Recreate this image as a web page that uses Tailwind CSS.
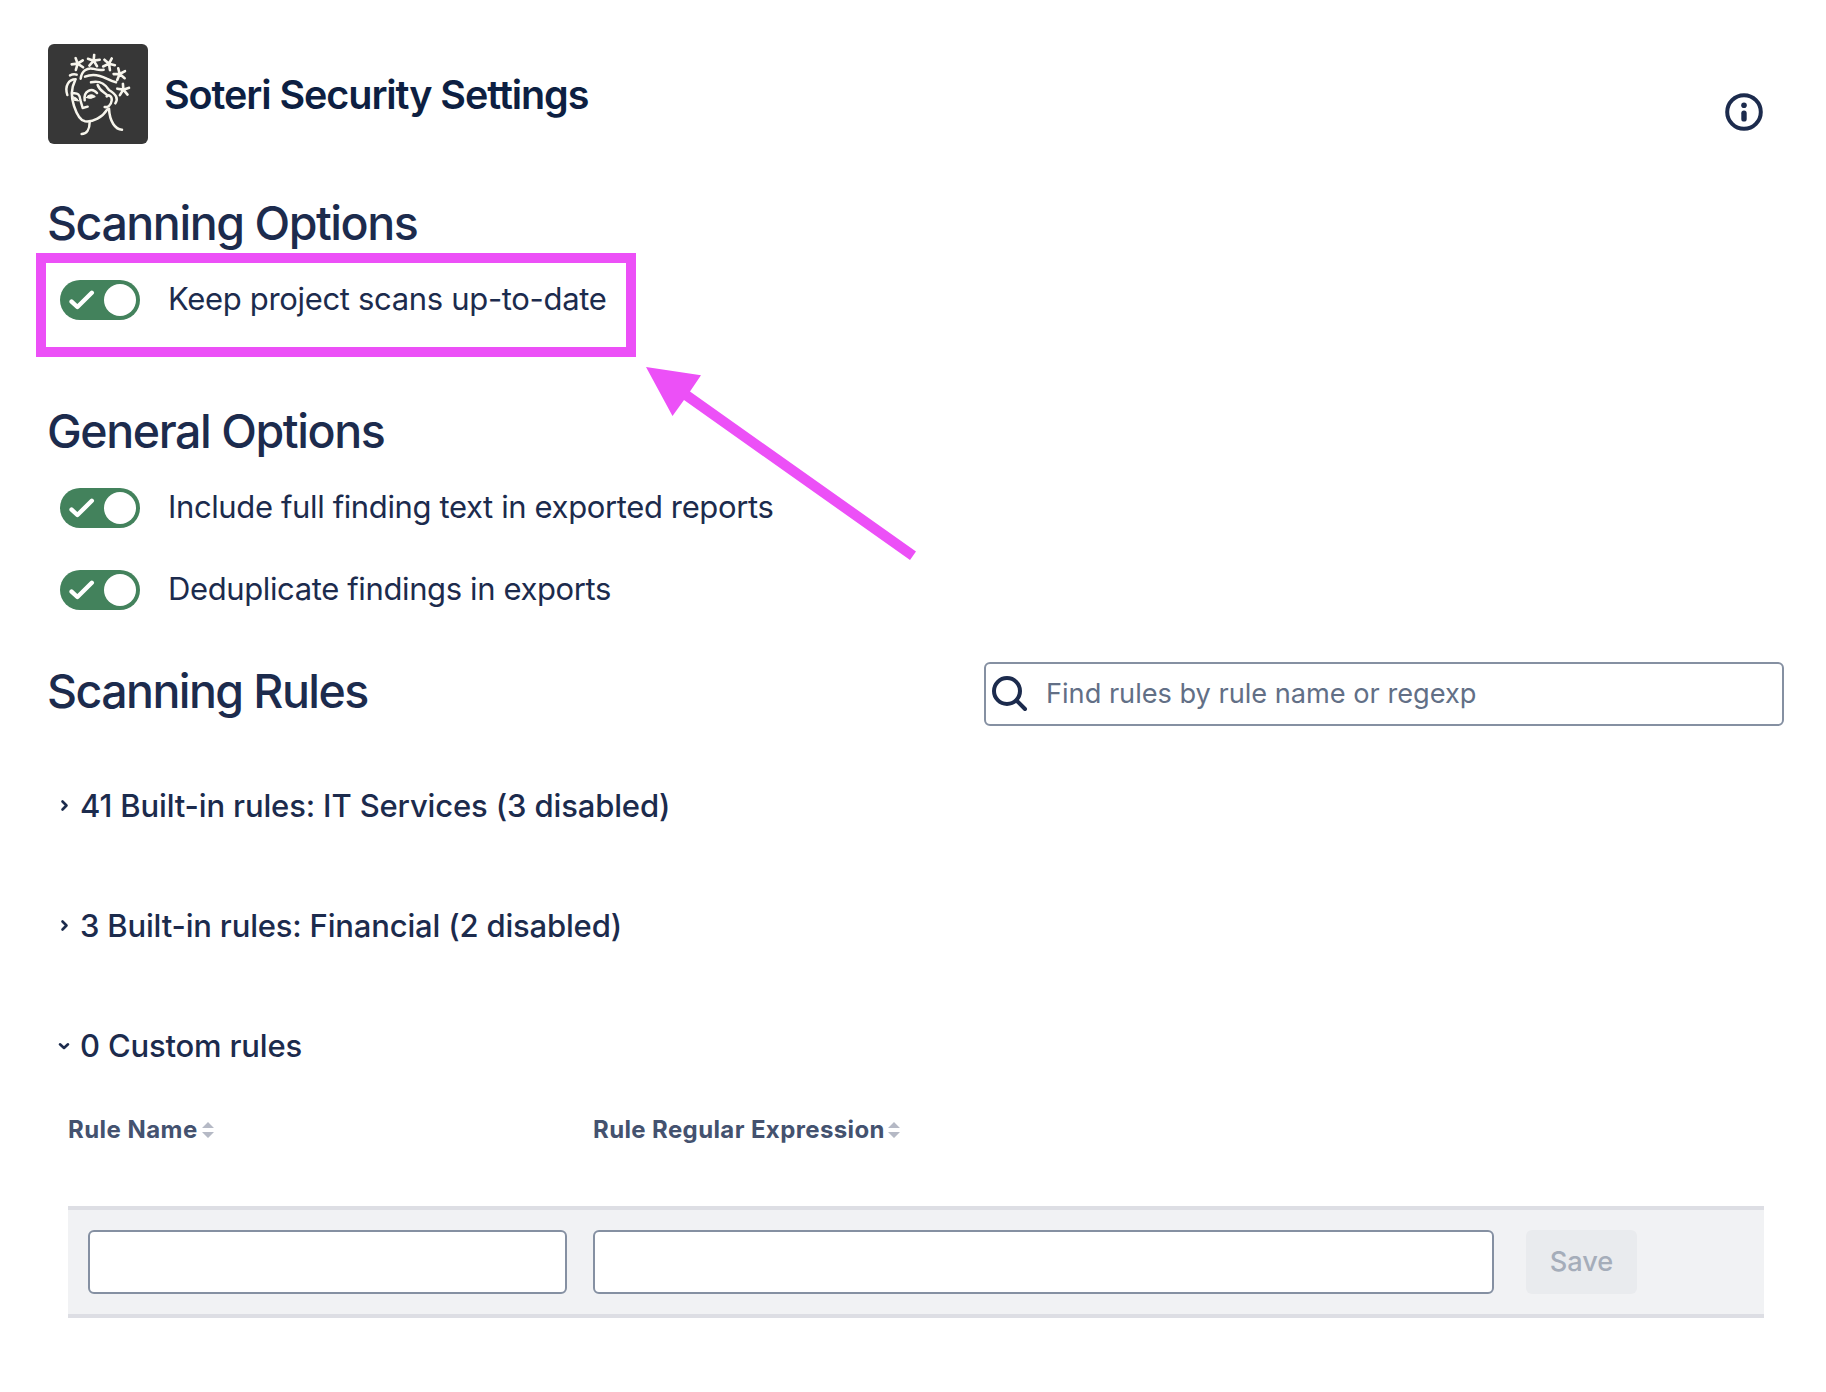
<!DOCTYPE html>
<html lang="en">
<head>
<meta charset="utf-8">
<title>Soteri Security Settings</title>
<script src="https://cdn.jsdelivr.net/npm/@tailwindcss/browser@4"></script>
</head>
<body class="relative bg-white font-['Inter',sans-serif] text-[#1C2B4D]">
<svg class="hidden">
  <symbol id="check" viewBox="0 0 26 20"><path d="M2.6 11.6 L8.4 17 L22.8 2.8" fill="none" stroke="#fff" stroke-width="4.4" stroke-linecap="round" stroke-linejoin="round"/></symbol>
  <symbol id="sort" viewBox="0 0 12 16"><path d="M0 6 L6 0 L12 6Z M0 10 L12 10 L6 16Z" fill="#B5B9C5"/></symbol>
  <symbol id="flower" viewBox="-21 -21 42 42"><path d="M0 0V-17M0 0L17 -4M0 0L11 15M0 0L-11 15M0 0L-17 -4" fill="none" stroke="#F7F5EC" stroke-width="7.5" stroke-linecap="round"/></symbol>
</svg>

<main class="flex flex-col pl-12 pr-[42px] pt-11">
  <header class="flex h-[100px] items-center">
    <svg class="size-[100px] rounded-md bg-[#373737]" viewBox="54 42 300 300" fill="none" stroke="#F7F5EC" stroke-width="7.5" stroke-linecap="round" stroke-linejoin="round">
      <use href="#flower" x="121" y="79" width="44" height="44" transform="rotate(-20 143 101)"/>
      <use href="#flower" x="169" y="70" width="44" height="44" transform="rotate(5 191 92)"/>
      <use href="#flower" x="215" y="79" width="44" height="44" transform="rotate(28 237 101)"/>
      <use href="#flower" x="247" y="110" width="44" height="44" transform="rotate(-14 269 132)"/>
      <use href="#flower" x="258" y="157" width="44" height="44" transform="rotate(-4 280 179)"/>
      <path d="M112 195C103 166 117 148 137 148"/>
      <path d="M120 136Q130 131 140 134"/>
      <path d="M152 146C155 122 172 113 188 116C202 120 212 121 221 119"/>
      <path d="M165 140C192 128 215 138 230 146Q246 154 258 157"/>
      <path d="M183 157C212 150 226 163 237 180C258 193 266 205 256 220"/>
      <path d="M203 165C208 180 219 184 230 194"/>
      <path d="M135 152C121 180 124 205 132 228C140 252 152 272 165 274C190 277 217 262 232 238"/>
      <path d="M230 199C236 192 247 199 245 212C243 226 233 233 224 231"/>
      <path d="M129 190C143 188 150 194 151 210L158 234L173 230"/>
      <path d="M164 211C160 182 186 171 201 189"/>
      <path d="M169 203C174 192 189 192 196 200Q183 209 169 203Z" fill="#F7F5EC" stroke-width="3"/>
      <path d="M130 200Q142 203 146 213L133 211Z" fill="#F7F5EC" stroke-width="3"/>
      <path d="M179 276C179 298 170 312 155 312"/>
      <path d="M237 236C239 275 256 299 276 299"/>
    </svg>
    <h1 class="ml-4 mt-1 text-[39.5px] font-semibold leading-none tracking-[-1.08px] text-[#0D1F42]">Soteri Security Settings</h1>
    <svg class="ml-auto mr-[21px] mt-9 size-[38px]" viewBox="0 0 38 38">
      <circle cx="19" cy="19" r="16.8" fill="none" stroke="#1C2B4D" stroke-width="4"/>
      <circle cx="19" cy="12.3" r="2.8" fill="#1C2B4D"/><rect x="16.3" y="17.6" width="5.4" height="11" rx="2.7" fill="#1C2B4D"/>
    </svg>
  </header>

  <h2 class="-ml-px mt-[51px] text-[46.5px] font-[550] leading-[56px] tracking-[-1.46px]">Scanning Options</h2>
  <div class="ml-3 mt-[29px] flex h-10 items-center gap-7">
    <span class="flex h-10 w-20 items-center justify-between rounded-full bg-[#43825C] pl-[9px] pr-1"><svg class="h-5 w-[26px]"><use href="#check"/></svg><i class="size-8 rounded-full bg-white"></i></span>
    <span class="pb-[3px] text-[31px] leading-9 tracking-[-0.33px]">Keep project scans up-to-date</span>
  </div>

  <h2 class="-ml-px mt-[83px] text-[46.5px] font-[550] leading-[56px] tracking-[-1.42px]">General Options</h2>
  <div class="ml-3 mt-[29px] flex h-10 items-center gap-7">
    <span class="flex h-10 w-20 items-center justify-between rounded-full bg-[#43825C] pl-[9px] pr-1"><svg class="h-5 w-[26px]"><use href="#check"/></svg><i class="size-8 rounded-full bg-white"></i></span>
    <span class="pb-[3px] text-[31px] leading-9 tracking-[-0.375px]">Include full finding text in exported reports</span>
  </div>
  <div class="ml-3 mt-[42px] flex h-10 items-center gap-7">
    <span class="flex h-10 w-20 items-center justify-between rounded-full bg-[#43825C] pl-[9px] pr-1"><svg class="h-5 w-[26px]"><use href="#check"/></svg><i class="size-8 rounded-full bg-white"></i></span>
    <span class="pb-[3px] text-[31px] leading-9 tracking-[-0.38px]">Deduplicate findings in exports</span>
  </div>

  <div class="mt-[52px] flex h-16 items-center justify-between">
    <h2 class="-ml-px pb-[7px] text-[46.5px] font-[550] leading-[56px] tracking-[-1.58px]">Scanning Rules</h2>
    <label class="flex h-16 w-[800px] items-center rounded-md border-2 border-[#8590A2] pl-1.5">
      <svg class="size-9" viewBox="0 0 36 36" fill="none" stroke="#1C2B4D" stroke-width="4" stroke-linecap="round"><circle cx="15" cy="15" r="13"/><path d="M25 25L33 33"/></svg>
      <input class="ml-[18px] w-[600px] text-[27.2px] leading-9 tracking-[-0.02px] outline-none placeholder:text-[#626F86]" placeholder="Find rules by rule name or regexp">
    </label>
  </div>

  <h3 class="mt-[60px] flex h-10 items-center text-[31px] font-[550] leading-10 tracking-[-0.142px]">
    <svg class="ml-[9px] mr-[9px] size-3.5" viewBox="0 0 14 14" fill="none" stroke="#1C2B4D" stroke-width="2.6" stroke-linecap="round" stroke-linejoin="round"><path d="M5.5 2.5L9.5 6.5L5.5 10.5"/></svg>41 Built-in rules: IT Services (3 disabled)</h3>
  <h3 class="mt-20 flex h-10 items-center text-[31px] font-[550] leading-10 tracking-[-0.179px]">
    <svg class="ml-[9px] mr-[9px] size-3.5" viewBox="0 0 14 14" fill="none" stroke="#1C2B4D" stroke-width="2.6" stroke-linecap="round" stroke-linejoin="round"><path d="M5.5 2.5L9.5 6.5L5.5 10.5"/></svg>3 Built-in rules: Financial (2 disabled)</h3>
  <h3 class="mt-20 flex h-10 items-center text-[31px] font-[550] leading-10 tracking-[-0.183px]">
    <svg class="ml-[9px] mr-[9px] size-3.5" viewBox="0 0 14 14" fill="none" stroke="#1C2B4D" stroke-width="2.6" stroke-linecap="round" stroke-linejoin="round"><path d="M3 5.3L7 9L11 5.3"/></svg>0 Custom rules</h3>

  <section class="ml-5 mr-5 mt-12">
    <div class="flex h-8 items-center text-2xl font-bold leading-8 text-[#44526F]">
      <div class="flex w-[525px] items-center"><span class="tracking-[0.45px]">Rule Name</span><svg class="ml-1 h-4 w-3"><use href="#sort"/></svg></div>
      <div class="flex items-center"><span class="tracking-[0.38px]">Rule Regular Expression</span><svg class="ml-[3.5px] h-4 w-3"><use href="#sort"/></svg></div>
    </div>
    <div class="mt-[60px] flex h-28 items-center border-y-4 border-[#DDDEE4] bg-[#F1F2F4] pl-5">
      <input class="h-16 w-[479px] rounded-md border-2 border-[#8590A2] bg-white">
      <input class="ml-[26px] h-16 w-[901px] rounded-md border-2 border-[#8590A2] bg-white">
      <button class="ml-8 h-16 w-[111px] rounded-md bg-[#E9EBEE] text-[27.2px] font-medium text-[#A5ADBA]" disabled>Save</button>
    </div>
  </section>
</main>

<!-- callout box and arrow -->
<div class="absolute left-9 top-[253px] h-[104px] w-[600px] border-[10px] border-[#EC50F7]"></div>
<svg class="absolute left-[640px] top-[360px] h-[205px] w-[280px]" viewBox="640 360 280 205"><path d="M646 367L701 375.3L690 391.5L916 551.5L910 560L684 400L672.5 416Z" fill="#EC50F7"/></svg>
</body>
</html>
